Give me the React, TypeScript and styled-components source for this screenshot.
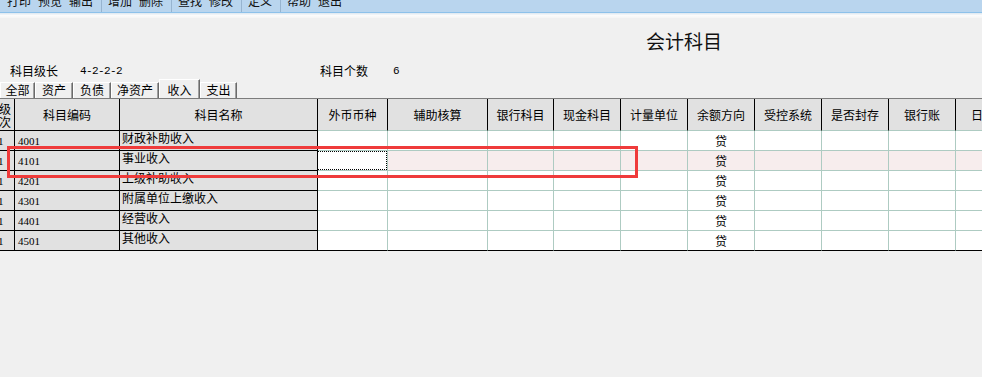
import React from "react";
import styled, { createGlobalStyle } from "styled-components";

const GlobalStyle = createGlobalStyle`
  html, body { margin: 0; padding: 0; }
  body {
    background: #f0f0f0;
    overflow: hidden;
    font-family: "Noto Sans CJK SC", "Noto Sans", sans-serif;
    font-size: 12px;
    color: #000;
  }
`;

const CJK = `"Noto Sans CJK SC", "Noto Sans", sans-serif`;

const Page = styled.div`
  width: 982px;
  height: 377px;
  overflow: hidden;
  background: #f0f0f0;
`;

const Toolbar = styled.div`
  display: flex;
  align-items: flex-start;
  gap: 6px;
  height: 12px;
  padding-left: 7px;
  background: #b9d5ee;
  border-bottom: 1px solid #8dc1ea;
  overflow: hidden;
`;

const ToolItem = styled.span`
  flex: none;
  width: 25px;
  margin-top: -5px;
  font-family: ${CJK};
  font-size: 12px;
  line-height: 12px;
  white-space: nowrap;
  color: #111;
`;

const ToolSep = styled.span`
  flex: none;
  width: 1px;
  height: 12px;
  margin-left: 1px;
  background: #97b4cf;
`;

const Shade = styled.div`
  height: 5px;
  background: linear-gradient(#dde7f0, #fbfbfb 50%, #f5f5f5);
`;

const TitleBar = styled.div`
  display: flex;
  justify-content: center;
  padding: 13px 0 0 386px;
  height: 20px;
  margin-bottom: 13px;
`;

const Title = styled.h1`
  margin: 0;
  font-family: ${CJK};
  font-weight: normal;
  font-size: 19px;
  line-height: 20px;
  color: #111;
`;

const InfoRow = styled.div`
  display: flex;
  height: 14px;
  padding-left: 10px;
  font-size: 12px;
  line-height: 14px;
`;

const InfoLabel = styled.span<{ $w: number }>`
  flex: none;
  width: ${(p) => p.$w}px;
  font-family: ${CJK};
`;

const InfoValue = styled.span<{ $w?: number }>`
  flex: none;
  width: ${(p) => (p.$w ? `${p.$w}px` : "auto")};
  font-family: "Liberation Mono", monospace;
  font-size: 11px;
  letter-spacing: -0.6px;
`;

const TabBar = styled.div`
  display: flex;
  align-items: flex-end;
  height: 20px;
`;

const Tab = styled.div<{ $w: number; $active?: boolean }>`
  flex: none;
  box-sizing: border-box;
  width: ${(p) => p.$w}px;
  height: ${(p) => (p.$active ? 19 : 16)}px;
  padding-top: ${(p) => (p.$active ? 4 : 1)}px;
  border-top: 1px solid #ffffff;
  border-left: 1px solid #ffffff;
  border-right: 1px solid #6b6b6b;
  box-shadow: inset -1px 0 0 #a0a0a0;
  background: #f0f0f0;
  text-align: center;
  font-family: ${CJK};
  font-size: 12px;
  line-height: 12px;
  white-space: nowrap;
  overflow: hidden;
`;

const TableWrap = styled.div`
  position: relative;
  border-top: 1px solid #7c7c7c;
`;

const Row = styled.div`
  display: flex;
  width: max-content;
`;

const HeadCell = styled.div<{ $w: number; $gray: boolean }>`
  flex: none;
  box-sizing: border-box;
  width: ${(p) => p.$w}px;
  height: 32px;
  display: flex;
  align-items: center;
  justify-content: center;
  background: #e1e1e1;
  border-right: 1px solid #000;
  border-bottom: 1px solid ${(p) => (p.$gray ? "#000" : "#aecbc2")};
  font-family: ${CJK};
  font-size: 12px;
  line-height: 13px;
  white-space: nowrap;
  overflow: hidden;
`;

const LevelHead = styled.div`
  width: 14px;
  margin-left: -2px;
  display: flex;
  flex-direction: column;
  line-height: 13px;
`;

const BodyCell = styled.div<{
  $w: number;
  $gray: boolean;
  $pink?: boolean;
  $last?: boolean;
}>`
  flex: none;
  box-sizing: border-box;
  width: ${(p) => p.$w}px;
  height: 20px;
  overflow: hidden;
  white-space: nowrap;
  background: ${(p) => (p.$gray ? "#e1e1e1" : p.$pink ? "#f7eded" : "#ffffff")};
  border-right: 1px solid ${(p) => (p.$gray ? "#000" : "#aecbc2")};
  border-bottom: 1px solid ${(p) => (p.$gray || p.$last ? "#000" : "#aecbc2")};
`;

const LevelText = styled.div`
  margin-left: -2px;
  padding-top: 4px;
  font-family: "Liberation Serif", serif;
  font-size: 11px;
  line-height: 12px;
`;

const CodeText = styled.div`
  padding: 4px 0 0 3px;
  font-family: "Liberation Serif", serif;
  font-size: 11px;
  line-height: 12px;
`;

const NameText = styled.div`
  padding: 0 0 0 2px;
  font-family: ${CJK};
  font-size: 12px;
  line-height: 13px;
`;

const DirText = styled.div`
  padding-top: 3px;
  text-align: center;
  font-family: ${CJK};
  font-size: 12px;
  line-height: 13px;
`;

const FocusBox = styled.div`
  box-sizing: border-box;
  height: 100%;
  margin-left: -1px;
  border: 1px dotted #000;
  background: #fff;
`;

const Highlight = styled.div`
  position: absolute;
  left: 7px;
  top: 47px;
  width: 631px;
  height: 32px;
  box-sizing: border-box;
  border: 3px solid #ef3b3b;
  pointer-events: none;
`;

const toolGroups = [
  ["打印", "预览", "输出"],
  ["增加", "删除"],
  ["查找", "修改"],
  ["定义"],
  ["帮助", "退出"],
];

const tabs = [
  { label: "全部", w: 35 },
  { label: "资产", w: 38 },
  { label: "负债", w: 38 },
  { label: "净资产", w: 48 },
  { label: "收入", w: 41, active: true },
  { label: "支出", w: 37 },
];

type Col = { key: string; w: number; gray: boolean; label: string };

const cols: Col[] = [
  { key: "lv", w: 15, gray: true, label: "级次" },
  { key: "code", w: 105, gray: true, label: "科目编码" },
  { key: "name", w: 198, gray: true, label: "科目名称" },
  { key: "fx", w: 70, gray: false, label: "外币币种" },
  { key: "aux", w: 100, gray: false, label: "辅助核算" },
  { key: "bank", w: 66, gray: false, label: "银行科目" },
  { key: "cash", w: 67, gray: false, label: "现金科目" },
  { key: "unit", w: 67, gray: false, label: "计量单位" },
  { key: "dir", w: 67, gray: false, label: "余额方向" },
  { key: "ctrl", w: 67, gray: false, label: "受控系统" },
  { key: "seal", w: 67, gray: false, label: "是否封存" },
  { key: "bacc", w: 67, gray: false, label: "银行账" },
  { key: "jour", w: 67, gray: false, label: "日记账" },
];

const rows = [
  { code: "4001", name: "财政补助收入" },
  { code: "4101", name: "事业收入" },
  { code: "4201", name: "上级补助收入" },
  { code: "4301", name: "附属单位上缴收入" },
  { code: "4401", name: "经营收入" },
  { code: "4501", name: "其他收入" },
];

const SELECTED = 1;

function renderCell(col: Col, row: { code: string; name: string }, ri: number) {
  switch (col.key) {
    case "lv":
      return <LevelText>1</LevelText>;
    case "code":
      return <CodeText>{row.code}</CodeText>;
    case "name":
      return <NameText>{row.name}</NameText>;
    case "dir":
      return <DirText>贷</DirText>;
    case "fx":
      return ri === SELECTED ? <FocusBox /> : null;
    default:
      return null;
  }
}

export default function App() {
  return (
    <Page>
      <GlobalStyle />
      <Toolbar>
        {toolGroups.map((g, gi) => (
          <React.Fragment key={gi}>
            {gi > 0 && <ToolSep />}
            {g.map((t) => (
              <ToolItem key={t}>{t}</ToolItem>
            ))}
          </React.Fragment>
        ))}
      </Toolbar>
      <Shade />
      <TitleBar>
        <Title>会计科目</Title>
      </TitleBar>
      <InfoRow>
        <InfoLabel $w={70}>科目级长</InfoLabel>
        <InfoValue $w={240}>4-2-2-2</InfoValue>
        <InfoLabel $w={73}>科目个数</InfoLabel>
        <InfoValue>6</InfoValue>
      </InfoRow>
      <TabBar>
        {tabs.map((t) => (
          <Tab key={t.label} $w={t.w} $active={t.active}>
            {t.label}
          </Tab>
        ))}
      </TabBar>
      <TableWrap>
        <Row>
          {cols.map((c) =>
            c.key === "lv" ? (
              <HeadCell key={c.key} $w={c.w} $gray={c.gray}>
                <LevelHead>
                  <span>级</span>
                  <span>次</span>
                </LevelHead>
              </HeadCell>
            ) : (
              <HeadCell key={c.key} $w={c.w} $gray={c.gray}>
                {c.label}
              </HeadCell>
            )
          )}
        </Row>
        {rows.map((r, ri) => (
          <Row key={r.code}>
            {cols.map((c) => (
              <BodyCell
                key={c.key}
                $w={c.w}
                $gray={c.gray}
                $pink={ri === SELECTED}
                $last={ri === rows.length - 1}
              >
                {renderCell(c, r, ri)}
              </BodyCell>
            ))}
          </Row>
        ))}
        <Highlight />
      </TableWrap>
    </Page>
  );
}
